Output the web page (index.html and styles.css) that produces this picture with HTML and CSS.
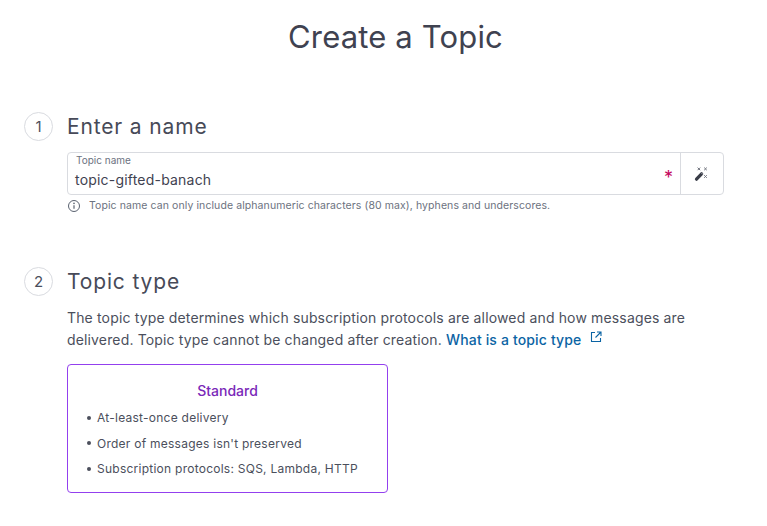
FILE: index.html
```html
<!DOCTYPE html>
<html lang="en">
<head>
    <meta charset="UTF-8">
    <meta name="viewport" content="width=device-width, initial-scale=1.0">
    <title>Create a Topic</title>
    <link rel="stylesheet" href="styles.css">
</head>
<body>
    <h1 class="page-title">Create a Topic</h1>

    <section class="step step-name">
        <div class="step-head">
            <span class="step-num">1</span>
            <h2>Enter a name</h2>
        </div>
        <div class="step-body">
            <div class="name-field">
                <div class="name-input">
                    <label>Topic name</label>
                    <div class="name-value">topic-gifted-banach</div>
                </div>
                <span class="required">*</span>
                <button class="wand-btn" aria-label="Generate name">
                    <svg width="16" height="16" viewBox="0 0 16 16">
                        <path d="M2.5 13.2 7.6 7.8" stroke="#3a3d48" stroke-width="3.2" stroke-linecap="round"/>
                        <path d="M7 6.6l1.8 1.8" stroke="#a6a9b1" stroke-width="1"/>
                        <path d="M3.6 1.6l2.6 2.6M6.2 1.6 3.6 4.2M10.2 1.6l2.6 2.6M12.8 1.6l-2.6 2.6M10.2 9.2l2.6 2.6M12.8 9.2l-2.6 2.6" stroke="#6f727c" stroke-width="1"/>
                    </svg>
                </button>
            </div>
            <p class="hint">
                <svg class="info-icon" width="14" height="14" viewBox="0 0 14 14" fill="none">
                    <circle cx="7" cy="7" r="5.5" stroke="#5a6270" stroke-width="1"/>
                    <path d="M7 6.2v3.6" stroke="#5a6270" stroke-width="1.2"/>
                    <circle cx="7" cy="4.4" r=".8" fill="#5a6270"/>
                </svg>
                <span>Topic name can only include alphanumeric characters (80 max), hyphens and underscores.</span>
            </p>
        </div>
    </section>

    <section class="step step-type">
        <div class="step-head">
            <span class="step-num">2</span>
            <h2>Topic type</h2>
        </div>
        <div class="step-body">
            <p class="intro">The topic type determines which subscription protocols are allowed and how messages are delivered. Topic type cannot be changed after creation. <a href="#">What is a topic type</a><svg class="ext-icon" width="12" height="12" viewBox="0 0 12 12" fill="none">
                    <path d="M5 1.5H1.5v9h9V7" stroke="#0b64a4" stroke-width="1.1"/>
                    <path d="M7 1h4v4M11 1 5.5 6.5" stroke="#0b64a4" stroke-width="1.1"/>
                </svg></p>
            <div class="type-card">
                <h3>Standard</h3>
                <ul>
                    <li>At-least-once delivery</li>
                    <li>Order of messages isn't preserved</li>
                    <li>Subscription protocols: SQS, Lambda, HTTP</li>
                </ul>
            </div>
        </div>
    </section>
</body>
</html>
```
FILE: styles.css
```css
body {
    margin: 0;
    padding: 0 43px 0 24px;
    background-color: #fff;
    font-family: Inter, sans-serif;
    color: #4b4f5c;
    overflow: hidden;
}

.page-title {
    margin: 18px 0 0 43px;
    text-align: center;
    font-size: 31px;
    line-height: 38px;
    font-weight: 400;
    letter-spacing: .15px;
    color: #3f4250;
}

.step-name {
    margin-top: 56px;
}

.step-type {
    margin-top: 53px;
}

.step-head {
    display: flex;
    align-items: center;
    gap: 14px;
}

.step-head h2 {
    margin: 0;
    font-size: 21px;
    line-height: 28px;
    font-weight: 400;
    letter-spacing: .85px;
    color: #474a58;
}

.step-num {
    width: 27px;
    height: 27px;
    border: 1px solid #d9dbe0;
    border-radius: 50%;
    display: flex;
    align-items: center;
    justify-content: center;
    font-size: 15px;
    color: #4b4f5c;
}

.step-body {
    margin-left: 43px;
}

.name-field {
    display: flex;
    align-items: stretch;
    height: 41px;
    margin-top: 11px;
    border: 1px solid #d9dbe0;
    border-radius: 4px;
}

.name-input {
    flex: 1;
    padding: 1px 8px 0 7px;
}

.name-input label {
    display: block;
    padding-left: 1px;
    font-size: 10px;
    line-height: 12px;
    color: #6c7280;
}

.name-value {
    margin-top: 4px;
    font-size: 14px;
    line-height: 20px;
    color: #3f4250;
    letter-spacing: .2px;
}

.required {
    width: 16px;
    color: #c4065e;
    font-size: 18px;
    line-height: 49px;
}

.wand-btn {
    width: 43px;
    border: none;
    border-left: 1px solid #d9dbe0;
    background: none;
    padding: 0;
    display: flex;
    align-items: center;
    justify-content: center;
}

.hint {
    display: flex;
    align-items: center;
    gap: 8px;
    margin: 3px 0 0 0;
    font-size: 10.5px;
    line-height: 16px;
    letter-spacing: .09px;
    color: #6c7280;
}

.intro {
    margin: 11px 0 0 0;
    font-size: 14px;
    line-height: 22px;
    letter-spacing: .15px;
    color: #4b4f5c;
}

.intro a {
    color: #0b64a4;
    font-weight: 500;
    text-decoration: none;
}

.ext-icon {
    margin-left: 9px;
    vertical-align: 2px;
}

.type-card {
    width: 319px;
    height: 127px;
    margin-top: 13px;
    border: 1px solid #9340ee;
    border-radius: 4px;
}

.type-card h3 {
    margin: 17px 0 0 0;
    text-align: center;
    font-size: 14px;
    line-height: 18px;
    font-weight: 500;
    color: #7a28b8;
}

.type-card ul {
    margin: 5px 0 0 0;
    padding: 0 0 0 19px;
    list-style: none;
}

.type-card li {
    display: flex;
    align-items: center;
    gap: 6px;
    font-size: 12px;
    line-height: 25.5px;
    letter-spacing: .25px;
    color: #4b4f5c;
}

.type-card li::before {
    content: "";
    width: 4px;
    height: 4px;
    border-radius: 50%;
    background-color: #4b4f5c;
}
```
